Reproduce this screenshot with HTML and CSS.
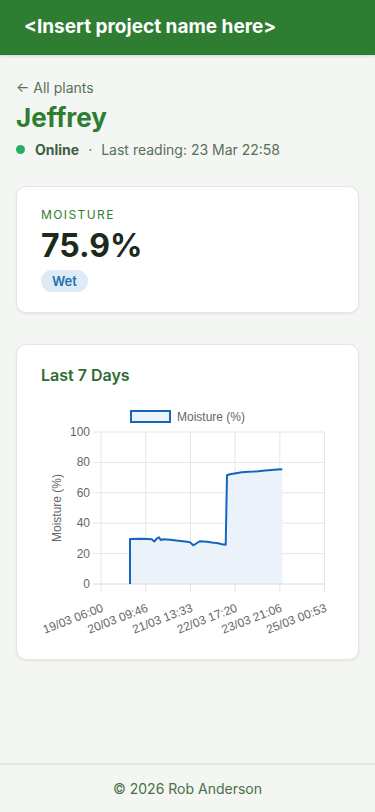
FILE: index.html
```html
<!DOCTYPE html>
<html lang="en">
<head>
  <meta charset="UTF-8" />
  <meta name="viewport" content="width=device-width, initial-scale=1.0"/>
  <title>Jeffrey</title>
  <link rel="stylesheet" href="styles.css">
</head>
<body>
  <!-- top bar -->
  <header class="topbar">
    <span class="brand">&lt;Insert project name here&gt;</span>
  </header>

  <main class="page">
    <a class="back" href="#">&larr; All plants</a>
    <h1 class="plant-name">Jeffrey</h1>
    <div class="status">
      <span class="dot"></span>
      <span class="online">Online</span>
      <span class="sep">&middot;</span>
      <span>Last reading: 23 Mar 22:58</span>
    </div>

    <!-- current reading -->
    <section class="card reading">
      <div class="label">Moisture</div>
      <div class="value">75.9%</div>
      <span class="pill">Wet</span>
    </section>

    <!-- history chart -->
    <section class="card">
      <h2 class="card-title">Last 7 Days</h2>
      <svg class="chart" viewBox="41 400 293 240" width="293" height="240">
        <!-- legend -->
        <rect x="131" y="411" width="39" height="11" fill="#ebf2fa" stroke="#1565c0" stroke-width="2"/>
        <text class="tick" x="177" y="420.5">Moisture (%)</text>

        <!-- grid -->
        <g class="grid">
          <line x1="93" y1="432" x2="324.5" y2="432"/>
          <line x1="93" y1="462.4" x2="324.5" y2="462.4"/>
          <line x1="93" y1="492.8" x2="324.5" y2="492.8"/>
          <line x1="93" y1="523.2" x2="324.5" y2="523.2"/>
          <line x1="93" y1="553.6" x2="324.5" y2="553.6"/>
          <line x1="101" y1="432" x2="101" y2="592"/>
          <line x1="145.7" y1="432" x2="145.7" y2="592"/>
          <line x1="190.4" y1="432" x2="190.4" y2="592"/>
          <line x1="235.1" y1="432" x2="235.1" y2="592"/>
          <line x1="279.8" y1="432" x2="279.8" y2="592"/>
          <line x1="324.5" y1="432" x2="324.5" y2="592"/>
        </g>

        <!-- data -->
        <polygon class="area" points="130,584 130,539 140,538.8 148,539 151.7,539.3 154.3,541.5 156.7,538.7 159,537.3 160.7,540 163.3,539.3 170,539.8 178.3,540.7 185,541.6 190,542.3 193.3,545.3 197,543 200,541.2 206.7,541.7 212,542.5 218.3,543.3 222,544.2 225.7,544.7 227,475.3 230,474.3 236,473.2 241.7,472.3 248.3,471.7 254,471.6 258.3,471.3 265,470.6 271.7,470 277,469.6 282.3,469.3 282.3,584"/>
        <line class="axis" x1="93" y1="584" x2="324.5" y2="584"/>
        <polyline class="line" points="130,584 130,539 140,538.8 148,539 151.7,539.3 154.3,541.5 156.7,538.7 159,537.3 160.7,540 163.3,539.3 170,539.8 178.3,540.7 185,541.6 190,542.3 193.3,545.3 197,543 200,541.2 206.7,541.7 212,542.5 218.3,543.3 222,544.2 225.7,544.7 227,475.3 230,474.3 236,473.2 241.7,472.3 248.3,471.7 254,471.6 258.3,471.3 265,470.6 271.7,470 277,469.6 282.3,469.3"/>

        <!-- y axis -->
        <g class="tick" text-anchor="end">
          <text x="90" y="436">100</text>
          <text x="90" y="466.4">80</text>
          <text x="90" y="496.8">60</text>
          <text x="90" y="527.2">40</text>
          <text x="90" y="557.6">20</text>
          <text x="90" y="588">0</text>
        </g>
        <text class="tick" x="0" y="0" text-anchor="middle" transform="translate(61 508) rotate(-90)">Moisture (%)</text>

        <!-- x axis -->
        <g class="tick" text-anchor="end">
          <text transform="translate(104 611) rotate(-21)">19/03 06:00</text>
          <text transform="translate(148.7 611) rotate(-21)">20/03 09:46</text>
          <text transform="translate(193.4 611) rotate(-21)">21/03 13:33</text>
          <text transform="translate(238.1 611) rotate(-21)">22/03 17:20</text>
          <text transform="translate(282.8 611) rotate(-21)">23/03 21:06</text>
          <text transform="translate(327.5 611) rotate(-21)">25/03 00:53</text>
        </g>
      </svg>
    </section>
  </main>

  <footer class="footer">&copy; 2026 Rob Anderson</footer>
</body>
</html>
```

FILE: styles.css
```css
body {
  font-family: Inter, "Liberation Sans", sans-serif;
  background-color: #f3f6f2;
  color: #1b2a1c;
  margin: 0;
  min-height: 100vh;
  display: flex;
  flex-direction: column;
}
.topbar {
  background-color: #2e7d32;
  height: 55px;
  display: flex;
  align-items: center;
  padding: 0 24px;
  box-shadow: 0 1px 3px rgba(0, 0, 0, 0.15);
}
.brand {
  color: #fff;
  font-size: 19px;
  font-weight: 700;
  margin-top: -2px;
}
.page {
  flex: 1;
  padding: 24px 16px 0;
}
.back {
  display: block;
  font-size: 14px;
  line-height: 17px;
  color: #587157;
  text-decoration: none;
}
.plant-name {
  font-size: 26px;
  line-height: 31px;
  font-weight: 700;
  color: #2e7d32;
  margin: 6px 0 8px;
}
.status {
  display: flex;
  align-items: center;
  gap: 8px;
  font-size: 14px;
  line-height: 17px;
  color: #587157;
}
.dot {
  width: 9px;
  height: 9px;
  border-radius: 50%;
  background-color: #27ae60;
  margin-right: 2px;
}
.online {
  font-weight: 700;
  color: #3f5d41;
}
.sep {
  margin: 0 1px;
}
.card {
  background-color: #fff;
  border: 1px solid #e1e9df;
  border-radius: 10px;
  box-shadow: 0 1px 3px rgba(0, 0, 0, 0.07);
  padding: 20px 24px;
  margin-top: 28px;
}
.card + .card {
  margin-top: 31px;
  padding-bottom: 19px;
}
.label {
  font-size: 12px;
  line-height: 15px;
  letter-spacing: 1.4px;
  text-transform: uppercase;
  color: #2e7d32;
}
.value {
  font-size: 32px;
  line-height: 38px;
  font-weight: 700;
  color: #1b2a1c;
  margin-top: 5px;
}
.pill {
  display: inline-block;
  margin-top: 5px;
  padding: 3px 11px;
  border-radius: 11px;
  background-color: #deebf6;
  color: #1f6fb2;
  font-size: 13px;
  line-height: 16px;
  font-weight: 600;
}
.card-title {
  font-size: 16px;
  line-height: 20px;
  font-weight: 600;
  color: #2e6b31;
  margin: 0;
}
.chart {
  display: block;
  margin-top: 15px;
  font-family: "Liberation Sans", Arial, sans-serif;
}
.chart .tick {
  font-size: 12px;
  fill: #666;
}
.chart .grid line {
  stroke: #e6e6e6;
  stroke-width: 1;
}
.chart .axis {
  stroke: #dadada;
  stroke-width: 1;
}
.chart .area {
  fill: #ebf2fa;
}
.chart .line {
  fill: none;
  stroke: #1565c0;
  stroke-width: 2;
  stroke-linejoin: round;
}
.footer {
  border-top: 2px solid #e1e9df;
  height: 47px;
  display: flex;
  align-items: center;
  justify-content: center;
  font-size: 14px;
  color: #4c6e4d;
}
```
